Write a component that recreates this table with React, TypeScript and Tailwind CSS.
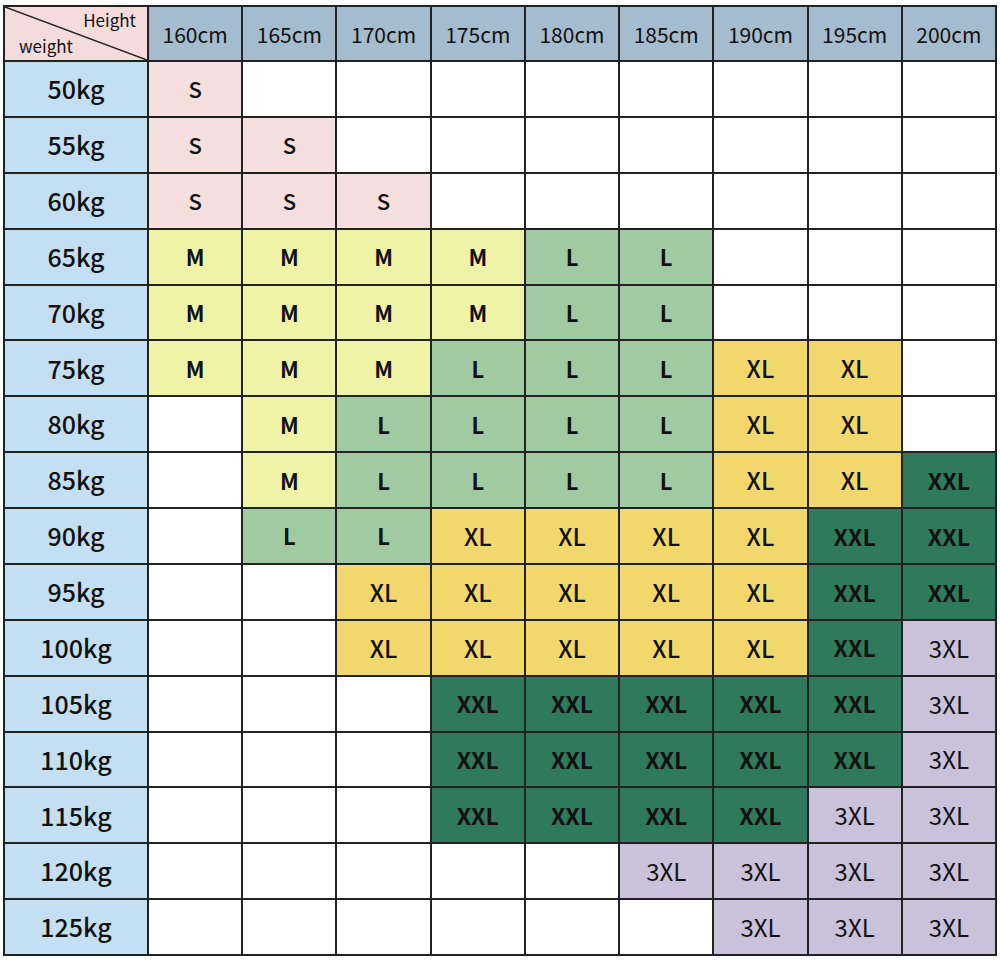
import React from "react";

const heights = ["160cm", "165cm", "170cm", "175cm", "180cm", "185cm", "190cm", "195cm", "200cm"];

const rows: [string, string[]][] = [
  ["50kg", ["S", "", "", "", "", "", "", "", ""]],
  ["55kg", ["S", "S", "", "", "", "", "", "", ""]],
  ["60kg", ["S", "S", "S", "", "", "", "", "", ""]],
  ["65kg", ["M", "M", "M", "M", "L", "L", "", "", ""]],
  ["70kg", ["M", "M", "M", "M", "L", "L", "", "", ""]],
  ["75kg", ["M", "M", "M", "L", "L", "L", "XL", "XL", ""]],
  ["80kg", ["", "M", "L", "L", "L", "L", "XL", "XL", ""]],
  ["85kg", ["", "M", "L", "L", "L", "L", "XL", "XL", "XXL"]],
  ["90kg", ["", "L", "L", "XL", "XL", "XL", "XL", "XXL", "XXL"]],
  ["95kg", ["", "", "XL", "XL", "XL", "XL", "XL", "XXL", "XXL"]],
  ["100kg", ["", "", "XL", "XL", "XL", "XL", "XL", "XXL", "3XL"]],
  ["105kg", ["", "", "", "XXL", "XXL", "XXL", "XXL", "XXL", "3XL"]],
  ["110kg", ["", "", "", "XXL", "XXL", "XXL", "XXL", "XXL", "3XL"]],
  ["115kg", ["", "", "", "XXL", "XXL", "XXL", "XXL", "3XL", "3XL"]],
  ["120kg", ["", "", "", "", "", "3XL", "3XL", "3XL", "3XL"]],
  ["125kg", ["", "", "", "", "", "", "3XL", "3XL", "3XL"]],
];

function cellClass(v: string): string {
  switch (v) {
    case "S":
      return "bg-[#f5dede] text-[22px] font-medium";
    case "M":
      return "bg-[#eff3a6] text-[22px] font-semibold";
    case "L":
      return "bg-[#9fcaa2] text-[22px] font-semibold";
    case "XL":
      return "bg-[#f2d86c] text-[24px] font-medium";
    case "XXL":
      return "bg-[#2f7a5c] text-[23px] font-semibold";
    case "3XL":
      return "bg-[#cac1db] text-[24px] font-normal";
    default:
      return "bg-white";
  }
}

export default function App() {
  return (
    <div className="bg-white w-[1000px] h-[961px] pt-[5px] pl-[3px]" style={{ fontFamily: '"Noto Sans CJK SC", "Noto Sans", sans-serif' }}>
      <div className="w-[994px] h-[951px] bg-[#222] p-[2px] grid grid-cols-[142px_repeat(9,1fr)] grid-rows-[53px_repeat(16,1fr)] gap-[2px] text-[#111]">
        <div className="relative bg-[#f5dcdc] overflow-hidden">
          <svg className="absolute inset-0 w-full h-full" viewBox="0 0 142 53" preserveAspectRatio="none">
            <line x1="0" y1="0" x2="142" y2="53" stroke="#222" strokeWidth="1.5" />
          </svg>
          <span className="absolute right-[11px] top-[3px] text-[17px] leading-[20px]">Height</span>
          <span className="absolute left-[14px] bottom-[4px] text-[17px] leading-[20px]">weight</span>
        </div>
        {heights.map((h) => (
          <div key={h} className="bg-[#a5bbce] flex items-center justify-center text-[21px] pt-[2px]">
            {h}
          </div>
        ))}
        {rows.map(([w, vals]) => (
          <React.Fragment key={w}>
            <div className="bg-[#c3dff1] flex items-center justify-center text-[25px] font-medium">{w}</div>
            {vals.map((v, i) => (
              <div key={i} className={`${cellClass(v)} flex items-center justify-center`}>
                {v}
              </div>
            ))}
          </React.Fragment>
        ))}
      </div>
    </div>
  );
}
